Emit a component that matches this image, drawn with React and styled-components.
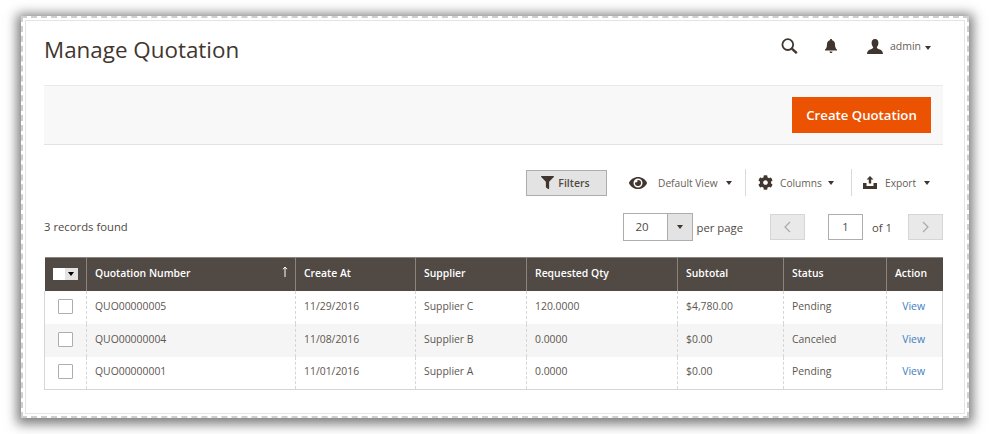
import React from 'react';
import styled, { createGlobalStyle } from 'styled-components';
import { FaFilter, FaEye, FaCog } from 'react-icons/fa';

const GlobalStyle = createGlobalStyle`
  html, body {
    margin: 0;
    padding: 0;
    background: #ffffff;
    font-family: "Open Sans", "Liberation Sans", sans-serif;
    color: #514943;
  }
`;

const Page = styled.div`
  width: 990px;
  height: 434px;
  box-sizing: border-box;
  padding: 16px 21px;
`;

const Frame = styled.div`
  height: 402px;
  box-sizing: border-box;
  background: #ffffff;
  border: 2px dashed #cfcfcf;
  padding: 2px;
  box-shadow: 0 2px 11px 4px #7c7c7c;
`;

const Inner = styled.div`
  height: 100%;
  box-sizing: border-box;
  border: 1px solid #e4e4e4;
  padding: 0 21px 0 18px;
`;

const Header = styled.header`
  height: 60px;
  display: flex;
  align-items: center;
  justify-content: space-between;
`;

const Title = styled.h1`
  margin: 0;
  font-size: 22.4px;
  font-weight: 400;
  color: #41362f;
  position: relative;
  top: -2px;
`;

const HeaderTools = styled.div`
  display: flex;
  align-items: center;
  padding-right: 12px;
  color: #41362f;
  position: relative;
  top: -5px;
`;

const SearchButton = styled.span`
  display: flex;
  margin-right: 27px;
`;

const BellButton = styled.span`
  display: flex;
  margin-right: 30px;
`;

const UserButton = styled.span`
  display: flex;
  align-items: center;
  gap: 7px;
  font-size: 10.5px;
  color: #676056;
`;

const Caret = styled.i`
  display: inline-block;
  width: 0;
  height: 0;
  margin-left: ${(p) => p.$gap || 6}px;
  border-left: 3.5px solid transparent;
  border-right: 3.5px solid transparent;
  border-top: 4px solid #41362f;
`;

const ActionBar = styled.div`
  height: 60px;
  box-sizing: border-box;
  margin-top: 4px;
  background: #f8f8f8;
  border-top: 1px solid #e9e9e9;
  border-bottom: 1px solid #e3e3e3;
  display: flex;
  align-items: center;
  justify-content: flex-end;
  padding-right: 12px;
`;

const PrimaryButton = styled.button`
  width: 139px;
  height: 36px;
  border: 0;
  padding: 0;
  background: #eb5202;
  color: #ffffff;
  font: 600 13.2px "Open Sans", sans-serif;
`;

const Toolbar = styled.div`
  height: 27px;
  margin-top: 24px;
  display: flex;
  align-items: center;
  justify-content: flex-end;
`;

const FilterButton = styled.button`
  width: 81px;
  height: 26px;
  box-sizing: border-box;
  margin-right: 22px;
  border: 1px solid #adadad;
  background: #e3e3e3;
  display: flex;
  align-items: center;
  justify-content: center;
  gap: 4px;
  padding: 0 2px 0 0;
  color: #514943;
  font: 600 10.5px "Open Sans", sans-serif;
  svg {
    font-size: 13px;
    color: #41362f;
  }
`;

const ToolItem = styled.div`
  display: flex;
  align-items: center;
  height: 27px;
  box-sizing: border-box;
  width: ${(p) => p.$width}px;
  padding-left: ${(p) => p.$pad || 0}px;
  border-left: ${(p) => (p.$divider ? '1px solid #d9d9d9' : '0')};
  font-size: 10.2px;
  color: #676056;
`;

const ToolIcon = styled.span`
  display: flex;
  font-size: ${(p) => p.$size}px;
  color: #41362f;
  margin-right: ${(p) => p.$gap}px;
`;

const PagerRow = styled.div`
  margin-top: 16px;
  height: 30px;
  display: flex;
  align-items: center;
`;

const Records = styled.div`
  font-size: 11.3px;
  color: #514943;
  position: relative;
  top: -1px;
  margin-right: auto;
`;

const PerPage = styled.div`
  display: flex;
  width: 70px;
  height: 28px;
  box-sizing: border-box;
  border: 1px solid #adadad;
  margin-right: 4px;
`;

const PerPageValue = styled.span`
  width: 43px;
  font-size: 11.5px;
  line-height: 26px;
  padding-left: 12px;
  box-sizing: border-box;
`;

const PerPageToggle = styled.span`
  flex: 1;
  background: #e3e3e3;
  border-left: 1px solid #adadad;
  display: flex;
  align-items: center;
  justify-content: center;
  i {
    margin: 0;
  }
`;

const PagerText = styled.span`
  font-size: 11.3px;
  margin-right: ${(p) => p.$gap || 0}px;
  color: #514943;
`;

const PageButton = styled.span`
  display: flex;
  align-items: center;
  justify-content: center;
  width: 35px;
  height: 26px;
  box-sizing: border-box;
  border: 1px solid #d6d6d6;
  background: #e9e9e9;
  color: #a9a9a9;
  margin-right: ${(p) => p.$gap || 0}px;
`;

const PageInput = styled.span`
  width: 35px;
  height: 26px;
  box-sizing: border-box;
  border: 1px solid #adadad;
  text-align: center;
  font-size: 11px;
  line-height: 24px;
  margin-right: 9px;
`;

const Grid = styled.table`
  width: 898px;
  margin-top: 15px;
  border-collapse: collapse;
  table-layout: fixed;
  font-size: 10.4px;
  border-bottom: 1px solid #d6d6d6;
`;

const HeadCell = styled.th`
  height: 33px;
  padding: 0 8px 3px;
  box-sizing: border-box;
  background: #514943;
  color: #ffffff;
  font-weight: 600;
  font-size: 10.4px;
  text-align: left;
  position: relative;
  border-left: 1px solid #8a837e;
  border-top: 1px solid #8a837e;
  &:first-child {
    border-left: 0;
    padding-bottom: 0;
  }
`;

const SortArrow = styled.span`
  position: absolute;
  right: 7px;
  top: 8px;
  display: flex;
`;

const BulkSelect = styled.span`
  display: flex;
  width: 25px;
  height: 12px;
`;

const BulkBox = styled.span`
  width: 12px;
  background: #ffffff;
`;

const BulkToggle = styled.span`
  flex: 1;
  background: #e3e3e3;
  display: flex;
  align-items: center;
  justify-content: center;
  i {
    margin: 0;
    border-top-color: #000000;
  }
`;

const Row = styled.tr`
  background: ${(p) => (p.$alt ? '#f5f5f5' : '#ffffff')};
`;

const Cell = styled.td`
  height: 33px;
  padding: 0 8px 3px;
  box-sizing: border-box;
  color: #5e5650;
  border-left: 1px dashed #d6d6d6;
  &:last-child {
    border-right: 1px solid #d6d6d6;
  }
  &:first-child {
    border-left: 1px solid #d6d6d6;
    padding-bottom: 2px;
  }
`;

const CheckBox = styled.span`
  display: block;
  width: 13px;
  height: 13px;
  margin-left: 5px;
  background: #ffffff;
  border: 1px solid #adadad;
  border-radius: 1px;
`;

const ViewLink = styled.a`
  display: block;
  text-align: right;
  padding-right: 9px;
  color: #3d7ebf;
`;

const SearchIcon = () => (
  <svg width="17" height="16" viewBox="0 0 17 16" fill="none" stroke="#41362f">
    <circle cx="6.8" cy="6.6" r="5.4" strokeWidth="1.8" />
    <path d="M10.8 10.6 L15.8 15.2" strokeWidth="2.4" />
  </svg>
);

const BellIcon = () => (
  <svg width="12" height="14" viewBox="0 0 12 14" fill="#41362f">
    <path d="M6 0 C6.8 0 7.1 .5 7.1 1.2 C9 1.7 10 3.2 10 5.2 C10 8 10.6 9.4 12 10.6 V11.6 H0 V10.6 C1.4 9.4 2 8 2 5.2 C2 3.2 3 1.7 4.9 1.2 C4.9 .5 5.2 0 6 0 Z" />
    <path d="M4.5 12.4 H7.5 C7.4 13.4 6.8 14 6 14 C5.2 14 4.6 13.4 4.5 12.4 Z" />
  </svg>
);

const UserIcon = () => (
  <svg width="16" height="15" viewBox="0 0 16 15" fill="#41362f">
    <path d="M8 0 C10.4 0 11.6 1.8 11.4 4.2 C11.3 5.8 10.7 7.2 9.9 8 C9.7 9 10.4 9.6 12 10.2 C14.4 11 15.6 11.6 16 15 H0 C.4 11.6 1.6 11 4 10.2 C5.6 9.6 6.3 9 6.1 8 C5.3 7.2 4.7 5.8 4.6 4.2 C4.4 1.8 5.6 0 8 0 Z" />
  </svg>
);

const UploadIcon = () => (
  <svg width="14" height="13" viewBox="0 0 14 13" fill="#41362f">
    <path d="M7 0 L10.5 3.6 H8.2 V7.5 H5.8 V3.6 H3.5 Z" />
    <path d="M0 7 H3.5 V10 H10.5 V7 H14 V13 H0 Z" />
  </svg>
);

const Chevron = ({ left }) => (
  <svg width="7" height="12" viewBox="0 0 7 12" fill="none" stroke="#a9a9a9" strokeWidth="1.2">
    <path d={left ? 'M6 1 L1 6 L6 11' : 'M1 1 L6 6 L1 11'} />
  </svg>
);

const COLUMNS = [
  { title: 'Quotation Number', width: 209 },
  { title: 'Create At', width: 120 },
  { title: 'Supplier', width: 111 },
  { title: 'Requested Qty', width: 151 },
  { title: 'Subtotal', width: 106 },
  { title: 'Status', width: 103 },
  { title: 'Action', width: 56 },
];

const ROWS = [
  ['QUO00000005', '11/29/2016', 'Supplier C', '120.0000', '$4,780.00', 'Pending'],
  ['QUO00000004', '11/08/2016', 'Supplier B', '0.0000', '$0.00', 'Canceled'],
  ['QUO00000001', '11/01/2016', 'Supplier A', '0.0000', '$0.00', 'Pending'],
];

const App = () => (
  <Page>
    <GlobalStyle />
    <Frame>
      <Inner>
        <Header>
          <Title>Manage Quotation</Title>
          <HeaderTools>
            <SearchButton><SearchIcon /></SearchButton>
            <BellButton><BellIcon /></BellButton>
            <UserButton>
              <UserIcon />
              <span>admin<Caret $gap={4} /></span>
            </UserButton>
          </HeaderTools>
        </Header>
        <ActionBar>
          <PrimaryButton>Create Quotation</PrimaryButton>
        </ActionBar>
        <Toolbar>
          <FilterButton><FaFilter />Filters</FilterButton>
          <ToolItem $width={116}>
            <ToolIcon $size={18} $gap={11}><FaEye /></ToolIcon>
            Default View
            <Caret $gap={8} />
          </ToolItem>
          <ToolItem $width={106} $divider $pad={12}>
            <ToolIcon $size={15} $gap={7}><FaCog /></ToolIcon>
            Columns
            <Caret />
          </ToolItem>
          <ToolItem $width={92} $divider $pad={11}>
            <ToolIcon $size={14} $gap={8}><UploadIcon /></ToolIcon>
            Export
            <Caret $gap={8} />
          </ToolItem>
        </Toolbar>
        <PagerRow>
          <Records>3 records found</Records>
          <PerPage>
            <PerPageValue>20</PerPageValue>
            <PerPageToggle><Caret /></PerPageToggle>
          </PerPage>
          <PagerText $gap={27}>per page</PagerText>
          <PageButton $gap={23}><Chevron left /></PageButton>
          <PageInput>1</PageInput>
          <PagerText $gap={16}>of 1</PagerText>
          <PageButton><Chevron /></PageButton>
        </PagerRow>
        <Grid>
          <colgroup>
            <col style={{ width: 42 }} />
            {COLUMNS.map((c) => <col key={c.title} style={{ width: c.width }} />)}
          </colgroup>
          <thead>
            <tr>
              <HeadCell>
                <BulkSelect>
                  <BulkBox />
                  <BulkToggle><Caret /></BulkToggle>
                </BulkSelect>
              </HeadCell>
              {COLUMNS.map((c, i) => (
                <HeadCell key={c.title}>
                  {c.title}
                  {i === 0 && (
                    <SortArrow>
                      <svg width="6" height="11" viewBox="0 0 6 11" fill="none" stroke="#ffffff" strokeWidth="1">
                        <path d="M3 11 V1 M1 3.2 L3 1 L5 3.2" />
                      </svg>
                    </SortArrow>
                  )}
                </HeadCell>
              ))}
            </tr>
          </thead>
          <tbody>
            {ROWS.map((row, i) => (
              <Row key={row[0]} $alt={i === 1}>
                <Cell><CheckBox /></Cell>
                {row.map((value, j) => <Cell key={j}>{value}</Cell>)}
                <Cell><ViewLink>View</ViewLink></Cell>
              </Row>
            ))}
          </tbody>
        </Grid>
      </Inner>
    </Frame>
  </Page>
);

export default App;
